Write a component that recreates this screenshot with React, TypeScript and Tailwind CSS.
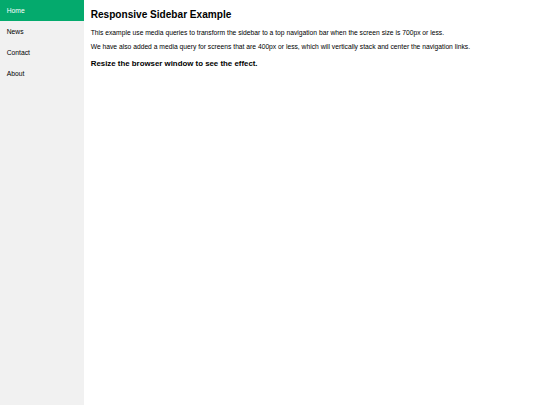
const links = ['Home', 'News', 'Contact', 'About'];

export default function App() {
  return (
    <div className="flex min-h-screen font-['Liberation_Sans',Arial,sans-serif] text-black">
      <nav className="w-[84px] shrink-0 bg-[#f1f1f1]">
        {links.map((link, i) => (
          <a
            key={link}
            href="#"
            className={`block p-[6.72px] text-[6.72px] leading-[1.15] ${
              i === 0 ? 'bg-[#04AA6D] text-white' : 'text-black'
            }`}
          >
            {link}
          </a>
        ))}
      </nav>
      <main className="flex-1 px-[6.72px] pt-[0.42px]">
        <h2 className="my-[8.4px] text-[10.08px] font-bold leading-[1.15]">Responsive Sidebar Example</h2>
        <p className="my-[6.72px] text-[6.72px] leading-[1.15]">
          This example use media queries to transform the sidebar to a top navigation bar when the screen size is 700px or less.
        </p>
        <p className="my-[6.72px] text-[6.72px] leading-[1.15]">
          We have also added a media query for screens that are 400px or less, which will vertically stack and center the navigation links.
        </p>
        <h3 className="my-[7.86px] text-[7.86px] font-bold leading-[1.15]">Resize the browser window to see the effect.</h3>
      </main>
    </div>
  );
}
